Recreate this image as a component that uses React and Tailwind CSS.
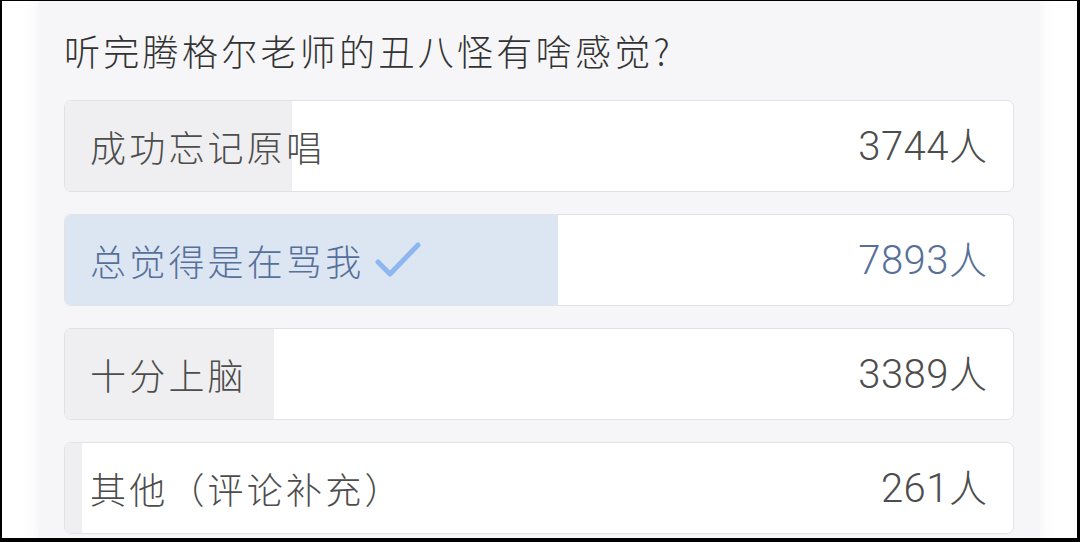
import React from "react";

const options = [
  { label: "成功忘记原唱", count: "3744", fill: 227, selected: false },
  { label: "总觉得是在骂我", count: "7893", fill: 493, selected: true },
  { label: "十分上脑", count: "3389", fill: 209, selected: false },
  { label: "其他（评论补充）", count: "261", fill: 17, selected: false },
];

function Check() {
  return (
    <svg width="46" height="38" viewBox="0 0 46 38" className="ml-[11px] shrink-0">
      <path
        d="M3 21 L15 33 L43 4"
        fill="none"
        stroke="#8db7ee"
        strokeWidth="5"
        strokeLinecap="round"
        strokeLinejoin="round"
      />
    </svg>
  );
}

export default function App() {
  return (
    <div
      className="w-[1080px] h-[542px] bg-white border-t border-l-2 border-r-[3px] border-b-[4px] border-black overflow-hidden flex"
      style={{ fontFamily: '"Noto Sans CJK SC", "Noto Sans", sans-serif' }}
    >
      <div className="ml-[36px] w-[1002px] h-full bg-[#f6f6f8] shadow-[0_0_10px_4px_rgba(246,246,248,0.9)] pl-[26px] pr-[26px] flex flex-col">
        <div className="h-[99px] flex items-center pb-[2px] text-[36px] font-light tracking-[3.3px] text-[#333333] leading-none">
          听完腾格尔老师的丑八怪有啥感觉?
        </div>
        <div className="flex flex-col gap-[22px]">
          {options.map((o, i) => (
            <div
              key={i}
              className="relative h-[92px] shrink-0 rounded-[7px] border border-[#e2e2e6] bg-white overflow-hidden"
            >
              <div
                className={
                  "absolute left-0 top-0 bottom-0 " +
                  (o.selected ? "bg-[#dce5f2]" : "bg-[#efeff1]")
                }
                style={{ width: o.fill }}
              />
              <div className="relative h-full flex items-center justify-between pl-[25px] pr-[26px] text-[36px] font-light leading-none">
                <div
                  className={
                    "flex items-center tracking-[3.2px] " +
                    (o.selected ? "text-[#57709a]" : "text-[#4d4d4d]")
                  }
                >
                  <span>{o.label}</span>
                  {o.selected && <Check />}
                </div>
                <span
                  className={
                    "flex items-baseline " +
                    (o.selected ? "text-[#57709a]" : "text-[#4d4d4d]")
                  }
                >
                  <span
                    className="text-[40px] font-light tracking-[0.5px]"
                    style={{ fontFamily: 'Roboto, "Liberation Sans", sans-serif' }}
                  >
                    {o.count}
                  </span>
                  <span className="text-[38px] font-light">人</span>
                </span>
              </div>
            </div>
          ))}
        </div>
      </div>
    </div>
  );
}
